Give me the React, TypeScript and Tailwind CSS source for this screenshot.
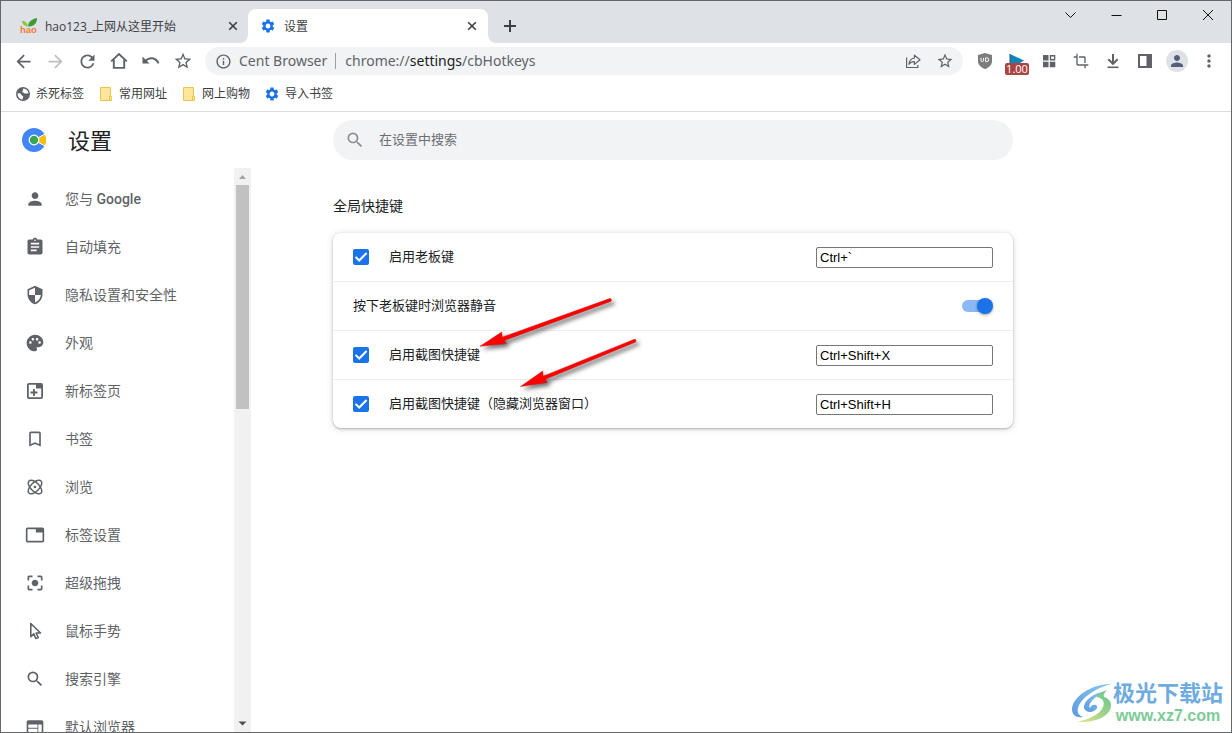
import type { ReactNode } from 'react';
import {
  MdArrowBack,
  MdArrowForward,
  MdAssignment,
  MdBookmarkBorder,
  MdCenterFocusStrong,
  MdCrop,
  MdInfoOutline,
  MdMoreVert,
  MdPalette,
  MdPerson,
  MdRefresh,
  MdSearch,
  MdSecurity,
  MdSettings,
  MdStarBorder,
  MdTab,
  MdWeb,
} from 'react-icons/md';

const NewTabIcon = () => (
  <svg viewBox="0 0 20 20" width={20} height={20} fill="none" stroke="currentColor" strokeWidth="1.8">
    <rect x="2.9" y="2.9" width="14.2" height="14.2" rx="1" />
    <path d="M11 3h6v4.500h-6z" fill="currentColor" stroke="none" />
    <path d="M9 8v7M5.500 11.500h7" />
  </svg>
);

const AtomIcon = () => (
  <svg viewBox="0 0 20 20" width={20} height={20} fill="none" stroke="currentColor" strokeWidth="1.500">
    <ellipse cx="10" cy="10" rx="8.600" ry="4.300" transform="rotate(45 10 10)" />
    <ellipse cx="10" cy="10" rx="8.600" ry="4.300" transform="rotate(-45 10 10)" />
    <circle cx="10" cy="10" r="1.300" fill="currentColor" stroke="none" />
  </svg>
);

const CursorIcon = () => (
  <svg viewBox="0 0 20 20" width={20} height={20} fill="none" stroke="currentColor" strokeWidth="1.600">
    <path d="M5.800 2.500v13.200l3-2.800 2 4.600 2.400-1-2-4.500h4.300z" strokeLinejoin="round" />
  </svg>
);

const HomeIcon = () => (
  <svg viewBox="0 0 20 20" width={20} height={20} fill="none" stroke="currentColor" strokeWidth="1.900">
    <path d="M2.200 10.400L10 3l7.800 7.400" />
    <path d="M4.800 8.500v8.400h10.400V8.500" />
  </svg>
);

const UndoIcon = () => (
  <svg viewBox="0 0 20 20" width={20} height={20}>
    <path d="M1.500 5.500v7h7z" fill="currentColor" />
    <path d="M4.500 9.800c4-4 10.300-3.400 13 2.600" fill="none" stroke="currentColor" strokeWidth="2" />
  </svg>
);

const ShareIcon = () => (
  <svg viewBox="0 0 20 20" width={20} height={20} fill="none" stroke="currentColor" strokeWidth="1.200">
    <path d="M3.600 6.500v10h11.200v-2.600" />
    <path d="M11.400 4.200l5.600 4.600-5.600 4.600v-2.700c-2.700 0-4.300.8-5.400 2.600.4-3.700 2.200-5.800 5.400-6.300z" strokeLinejoin="round" />
  </svg>
);

const ShieldIcon = () => (
  <svg viewBox="0 0 16 18" width={16} height={18}>
    <path d="M8 1l7 2v6c0 4-3 6.500-7 8-4-1.500-7-4-7-8V3z" fill="#7d7d7d" />
    <path d="M4 5.800v2.500a1.300 1.300 0 0 0 2.600 0V5.800M8.600 5.800v3.800h1.200a1.900 1.900 0 0 0 0-3.800z" fill="none" stroke="#fff" />
  </svg>
);

const SpeedIcon = () => (
  <span className="flex flex-col items-center pt-1.5">
    <svg viewBox="0 0 16 9" width={16} height={9}>
      <path d="M1 0l14 6.500L11 9H1z" fill="#0e86bd" />
      <path d="M1 0v9" stroke="#1b5d80" />
    </svg>
    <span className="h-3 w-6 rounded-[2px] bg-[#a94442] text-center font-['Open_Sans'] text-[11px] leading-3 text-white">
      1.00
    </span>
  </span>
);

const GridIcon = () => (
  <svg viewBox="0 0 14 14" width={14} height={14} fill="currentColor">
    <path d="M1 1h5.500v5.500H1zM1 7.800h5.500v5.500H1zM7.800 7.800h5.500v5.500H7.800z" />
    <path d="M8.500 1.700h4.100v4.100H8.500z" fill="none" stroke="currentColor" strokeWidth="1.400" />
  </svg>
);

const DownloadIcon = () => (
  <svg viewBox="0 0 16 16" width={16} height={16} fill="none" stroke="currentColor" strokeWidth="2">
    <path d="M8 1v9.500M3.300 6.200L8 10.900l4.700-4.700" />
    <path d="M2.500 14.300h11" strokeWidth="1.600" />
  </svg>
);

const SidePanelIcon = () => (
  <svg viewBox="0 0 14 14" width={14} height={14}>
    <path d="M0 0h14v14H0zM2 2v10h6.500V2z" fill="currentColor" fillRule="evenodd" />
  </svg>
);

const GlobeIcon = () => (
  <svg viewBox="0 0 16 16" width={16} height={16}>
    <circle cx="8" cy="8" r="7" fill="#5f6368" />
    <path d="M2.600 7.200c1.600-.2 3.300.2 3.700 1.500.4 1 1.700.8 1.900 2 .1 1-.7 1.400-.6 2.800-3-.3-5.200-2.900-5-6.300zM8.300 2.500c-.6 1 .2 1.600-.7 2.400-.7.6-.4 1.300.5 1.500 1 .2 1.300 1.300 2.500 1.200.9 0 1.600-.5 2.900-.2-.2-2.800-2.200-4.800-5.200-4.900z" fill="#fff" />
  </svg>
);

const FolderIcon = () => (
  <svg viewBox="0 0 16 16" width={16} height={16} fill="#ffe69a" stroke="#eac54e">
    <path d="M2.500 1.500h10v13h-10z" />
    <path d="M11.500 10.500h2v4h-2z" />
  </svg>
);

const HaoIcon = () => (
  <svg viewBox="0 0 18 18" width={18} height={18} className="shrink-0">
    <path d="M8.200 9.500C7.800 5 11 2.500 17 1c.2 5-3 9-8.800 8.500z" fill="#3f9c35" />
    <path d="M8 9.300C7.500 6 5.500 4 2 3.800c0 3 2.200 5.700 6 5.500z" fill="#8cc63f" />
    <text x="0" y="16" fontFamily="Liberation Sans, sans-serif" fontWeight="bold" fontSize="9.500" fill="#ef7d31">
      hao
    </text>
  </svg>
);

const CentLogo = () => (
  <svg viewBox="0 0 24 24" width={24} height={24}>
    <circle cx="12" cy="12" r="12" fill="#4285f4" />
    <path d="M12 12l11-6a12 12 0 0 1 0 12z" fill="#fbbc05" stroke="#fff" />
    <circle cx="12" cy="12" r="4.800" fill="#34a853" stroke="#fff" strokeWidth="1.300" />
  </svg>
);

const CloseIcon = () => (
  <svg viewBox="0 0 16 16" width={16} height={16} stroke="#3c4043" strokeWidth="1.600">
    <path d="M4.200 4.200l7.600 7.600M11.800 4.200l-7.600 7.600" />
  </svg>
);

const backButtons = [
  { label: '后退', icon: <MdArrowBack size={21} /> },
  { label: '前进', icon: <MdArrowForward size={21} className="text-[#bdbfc2]" /> },
  { label: '重新加载', icon: <MdRefresh size={21} /> },
  { label: '主页', icon: <HomeIcon /> },
  { label: '撤销', icon: <UndoIcon /> },
  { label: '收藏', icon: <MdStarBorder size={20} /> },
];

const extensionButtons = [
  { label: 'uBlock', icon: <ShieldIcon /> },
  { label: '播放速度', icon: <SpeedIcon /> },
  { label: '扩展程序', icon: <GridIcon /> },
  { label: '截图', icon: <MdCrop size={16} /> },
  { label: '下载', icon: <DownloadIcon /> },
  { label: '侧边栏', icon: <SidePanelIcon /> },
  {
    label: '用户',
    icon: (
      <span className="flex size-[22px] items-center justify-center rounded-full bg-[#dee1e6] text-[#545e78]">
        <MdPerson size={18} />
      </span>
    ),
  },
  { label: '菜单', icon: <MdMoreVert size={20} /> },
];

const bookmarks = [
  { label: '杀死标签', icon: <GlobeIcon /> },
  { label: '常用网址', icon: <FolderIcon /> },
  { label: '网上购物', icon: <FolderIcon /> },
  { label: '导入书签', icon: <MdSettings size={16} className="text-[#1a73e8]" /> },
];

const menu = [
  { label: '您与 Google', icon: <MdPerson size={20} /> },
  { label: '自动填充', icon: <MdAssignment size={20} /> },
  { label: '隐私设置和安全性', icon: <MdSecurity size={20} /> },
  { label: '外观', icon: <MdPalette size={20} /> },
  { label: '新标签页', icon: <NewTabIcon /> },
  { label: '书签', icon: <MdBookmarkBorder size={20} /> },
  { label: '浏览', icon: <AtomIcon /> },
  { label: '标签设置', icon: <MdTab size={20} /> },
  { label: '超级拖拽', icon: <MdCenterFocusStrong size={20} /> },
  { label: '鼠标手势', icon: <CursorIcon /> },
  { label: '搜索引擎', icon: <MdSearch size={20} /> },
  { label: '默认浏览器', icon: <MdWeb size={20} /> },
];

const IconButton = ({ label, children }: { label: string; children: ReactNode }) => (
  <button aria-label={label} className="flex h-7 w-8 shrink-0 items-center justify-center text-[#5f6368]">
    {children}
  </button>
);

const HotkeyRow = ({ id, label, value }: { id: string; label: string; value: string }) => (
  <div className="flex h-12 box-content items-center border-t border-[#ededed] px-5 first:border-t-0">
    <label className="flex flex-1 items-center gap-5">
      <span className="grid size-4">
        <input
          type="checkbox"
          defaultChecked
          className="peer col-start-1 row-start-1 size-4 appearance-none rounded-[2px] border-2 border-[#5f6368] checked:border-[#1a73e8] checked:bg-[#1a73e8]"
        />
        <svg
          viewBox="0 0 16 16"
          className="pointer-events-none invisible col-start-1 row-start-1 size-4 peer-checked:visible"
          fill="none"
          stroke="#fff"
          strokeWidth="2"
        >
          <path d="M2.500 7.900l3.700 3.600L13.600 4" />
        </svg>
      </span>
      {label}
    </label>
    <input
      id={id}
      aria-label={label}
      type="text"
      defaultValue={value}
      className="h-[21px] w-[177px] rounded-[2px] border border-[#767676] bg-white px-[3px] font-['Liberation_Sans',sans-serif] text-[13px] text-black"
    />
  </div>
);

const Arrows = () => (
  <svg
    viewBox="0 0 175 105"
    width={175}
    height={105}
    className="pointer-events-none absolute left-[469px] top-[289px] drop-shadow-[3px_3px_2px_rgba(0,0,0,0.55)]"
    fill="#fe0000"
    stroke="#c81414"
    strokeWidth="0.500"
  >
    <path d="M10 56.300L31.700 42l.5 5.200L139.600 8.600a1.500 1.500 0 0 1 1 2.800L34.400 50.400l1.800 3.200z" />
    <path d="M50.500 96.500L72.700 81l.5 5.200L164 49.400a1.500 1.500 0 0 1 1.100 2.800L75.300 89.300l1.900 3.200z" />
  </svg>
);

const TabStrip = () => (
  <header className="flex h-[42px] shrink-0 bg-[#dee1e6] pl-[7px] pt-2 text-xs text-[#3c4043]">
    <div className="flex w-[240px] items-center pl-3 pr-[7px]">
      <HaoIcon />
      <a href="#hao123" className="ml-[7px] flex-1 whitespace-nowrap pt-0.5">
        hao123_上网从这里开始
      </a>
      <button aria-label="关闭">
        <CloseIcon />
      </button>
    </div>
    <div className="relative flex w-[240px] items-center rounded-t-lg bg-white pl-3 pr-2">
      <span className="absolute -left-2 bottom-0 size-2 rounded-br-lg shadow-[0_0_0_8px_#fff] [clip-path:inset(0)]" />
      <span className="absolute -right-2 bottom-0 size-2 rounded-bl-lg shadow-[0_0_0_8px_#fff] [clip-path:inset(0)]" />
      <MdSettings size={16} className="text-[#1a73e8]" />
      <a href="#settings" className="ml-2 flex-1 pt-0.5">
        设置
      </a>
      <button aria-label="关闭">
        <CloseIcon />
      </button>
    </div>
    <button aria-label="新标签页" className="ml-1.5 flex w-8 items-center justify-center">
      <svg viewBox="0 0 14 14" width={14} height={14} stroke="#3c4043" strokeWidth="2">
        <path d="M7 1v12M1 7h12" />
      </svg>
    </button>
    <div className="-mt-2 ml-auto flex h-7">
      {[
        { label: '搜索标签页', d: 'M2.500 4.500l5 5 5-5' },
        { label: '最小化', d: 'M2.500 7.500h10' },
        { label: '最大化', d: 'M2.500 2.500h9v9h-9z' },
        { label: '关闭窗口', d: 'M2 2l10 10M12 2L2 12' },
      ].map((item) => (
        <button key={item.label} aria-label={item.label} className="flex w-[46px] items-center justify-center">
          <svg viewBox="0 0 14 14" width={14} height={14} fill="none" stroke="#111">
            <path d={item.d} />
          </svg>
        </button>
      ))}
    </div>
  </header>
);

const Toolbar = () => (
  <div className="flex h-9 shrink-0 items-center px-1.5">
    {backButtons.map((item) => (
      <IconButton key={item.label} label={item.label}>
        {item.icon}
      </IconButton>
    ))}
    <div className="mx-1.5 flex h-7 min-w-0 flex-1 items-center rounded-full bg-[#f1f3f4] pl-2.5 pr-0.5 font-['Noto_Sans','Noto_Sans_CJK_SC',sans-serif] text-sm text-[#5f6368]">
      <MdInfoOutline size={17} className="shrink-0" />
      <span className="ml-[7px] whitespace-nowrap">Cent Browser</span>
      <span className="ml-2 mr-[9px] h-4 w-px bg-[#9aa0a6]" />
      <div role="textbox" aria-label="地址栏" tabIndex={0} className="min-w-0 flex-1 truncate">
        chrome://<span className="text-[#202124]">settings</span>/cbHotkeys
      </div>
      <IconButton label="分享">
        <ShareIcon />
      </IconButton>
      <IconButton label="添加书签">
        <MdStarBorder size={18} />
      </IconButton>
    </div>
    {extensionButtons.map((item) => (
      <IconButton key={item.label} label={item.label}>
        {item.icon}
      </IconButton>
    ))}
  </div>
);

const Sidebar = () => (
  <aside className="flex w-[250px] shrink-0 flex-col">
    <div className="flex h-14 shrink-0 items-center gap-[22px] pl-[21px]">
      <CentLogo />
      <h1 className="text-[22px] leading-7 text-[#202124]">设置</h1>
    </div>
    <div className="flex min-h-0 flex-1">
      <nav className="flex-1 overflow-hidden pt-[7px]">
        {menu.map((item) => (
          <a
            key={item.label}
            href="#settings"
            className="flex h-12 items-center gap-5 pl-6 font-['Roboto','Noto_Sans_CJK_SC',sans-serif] text-sm text-[#5f6368]"
          >
            {item.icon}
            <span>
              {item.label.replace('Google', '')}
              {item.label.includes('Google') && <span className="font-medium">Google</span>}
            </span>
          </a>
        ))}
      </nav>
      <div className="flex w-[17px] flex-col items-center bg-[#f1f1f1]">
        <svg viewBox="0 0 17 17" width={17} height={17}>
          <path d="M8.500 7l3.500 4H5z" fill="#a3a3a3" />
        </svg>
        <div className="h-56 w-[13px] bg-[#c1c1c1]" />
        <svg viewBox="0 0 17 17" width={17} height={17} className="mt-auto">
          <path d="M8.500 10.500l4-4h-8z" fill="#505050" />
        </svg>
      </div>
    </div>
  </aside>
);

const Watermark = () => (
  <div className="absolute bottom-1.5 right-2 flex items-end">
    <svg viewBox="0 0 42 41" width={42} height={41} className="mb-0.5 shrink-0">
      <defs>
        <linearGradient id="blue" x1="0" y1="1" x2="1" y2="0">
          <stop offset="0" stopColor="#5b9be0" />
          <stop offset="1" stopColor="#8cc8ee" />
        </linearGradient>
        <linearGradient id="green" x1="0" y1="1" x2="1" y2="0">
          <stop offset="0" stopColor="#e6e58a" />
          <stop offset="1" stopColor="#5fc48c" />
        </linearGradient>
      </defs>
      <path d="M41 1C24 0 2 12 1 26c0 6 4 9 11 8-5-2-6-5-5-9C10 15 24 5 41 1z" fill="url(#blue)" />
      <path d="M35 8C23 10 13 17 13 24c0 3 3 5 7 5 5-1 8-5 5-7-2-1-5 0-6 3-3-3 3-11 16-17z" fill="url(#blue)" />
      <path d="M25 14c2-3 6-5 11-7-3 3-4 5-3 7 4 1 7 4 7 8 0 11-15 18-34 17 13-3 23-8 26-15 2-5 0-9-7-10z" fill="url(#green)" />
    </svg>
    <div className="text-center font-bold">
      <p className="text-[22px] leading-7 text-[#6eabdf]">极光下载站</p>
      <a href="#xz7" className="block font-['Liberation_Sans',sans-serif] text-base leading-5 text-[#7ccb97]">
        www.xz7.com
      </a>
    </div>
  </div>
);

const App = () => (
  <div className="relative flex h-screen flex-col overflow-hidden border border-[#65676b] bg-white font-['Open_Sans','Noto_Sans_CJK_SC',sans-serif]">
    <TabStrip />
    <Toolbar />
    <div className="flex h-[33px] shrink-0 gap-3.5 border-b border-[#dadce0] pb-0.5 pl-3.5 text-xs text-[#3c4043]">
      {bookmarks.map((item) => (
        <a key={item.label} href="#bookmark" className="flex items-center gap-[5px]">
          {item.icon}
          {item.label}
        </a>
      ))}
    </div>

    <div className="flex min-h-0 flex-1">
      <Sidebar />
      <main className="flex-1 pl-[82px] pr-6 pt-2 text-[13px] text-[#202124]">
        <div className="max-w-[680px]">
          <label className="flex h-10 items-center gap-3.5 rounded-full bg-[#f1f3f4] px-3 text-[#8b8f94]">
            <MdSearch size={20} />
            <input
              type="search"
              aria-label="在设置中搜索"
              placeholder="在设置中搜索"
              className="flex-1 bg-transparent outline-none placeholder:text-[#6b6f74]"
            />
          </label>

          <h2 className="mb-[17px] mt-[35px] text-sm leading-[21px]">全局快捷键</h2>

          <section className="rounded-lg bg-white shadow-[0_1px_2px_rgba(60,64,67,0.3),0_1px_6px_rgba(60,64,67,0.22)]">
            <HotkeyRow id="boss" label="启用老板键" value="Ctrl+`" />
            <label className="box-content flex h-12 items-center justify-between border-t border-[#ededed] px-5">
              按下老板键时浏览器静音
              <span className="grid w-[31px] items-center">
                <input
                  type="checkbox"
                  role="switch"
                  defaultChecked
                  className="peer col-start-1 row-start-1 h-3 w-7 appearance-none rounded-full bg-[#bdc1c6] checked:bg-[#8cb9f3]"
                />
                <span className="pointer-events-none col-start-1 row-start-1 size-4 rounded-full bg-white shadow-[0_1px_3px_rgba(0,0,0,0.4)] peer-checked:justify-self-end peer-checked:bg-[#1a73e8]" />
              </span>
            </label>
            <HotkeyRow id="capture" label="启用截图快捷键" value="Ctrl+Shift+X" />
            <HotkeyRow id="capture-hidden" label="启用截图快捷键（隐藏浏览器窗口）" value="Ctrl+Shift+H" />
          </section>
        </div>
      </main>
    </div>

    <Arrows />
    <Watermark />
  </div>
);

export default App;
